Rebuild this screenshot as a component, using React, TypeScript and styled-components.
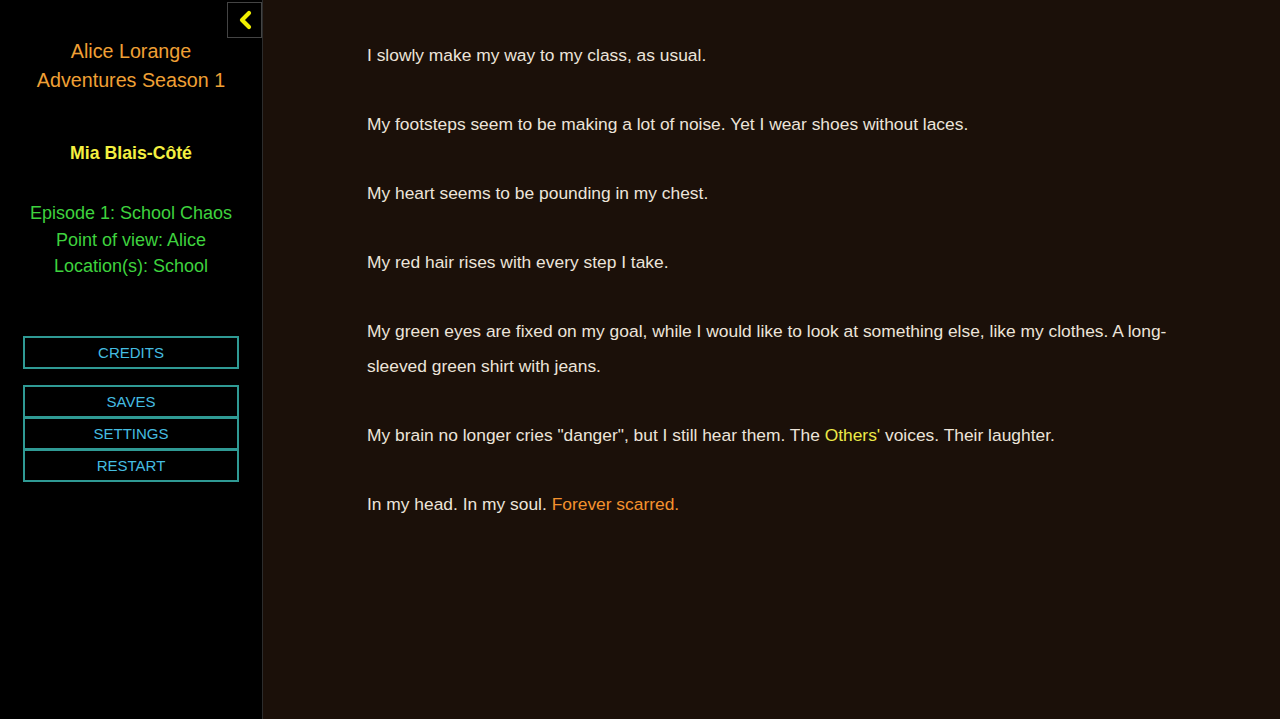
import React from 'react';
import styled, { createGlobalStyle } from 'styled-components';

const Global = createGlobalStyle`
  html, body { margin: 0; padding: 0; background: #1b1009; }
  body { font-family: "Liberation Sans", Arial, sans-serif; }
`;

const Page = styled.div`
  display: flex;
  width: 1280px;
  height: 719px;
  overflow: hidden;
`;

const Sidebar = styled.aside`
  position: relative;
  width: 262px;
  flex: none;
  background: #000;
  border-right: 1px solid #2c2c2c;
  padding-top: 37px;
  box-sizing: content-box;
  text-align: center;
`;

const BackButton = styled.button`
  position: absolute;
  top: 2px;
  right: 0;
  width: 35px;
  height: 36px;
  background: #000;
  border: 1px solid #444;
  display: flex;
  align-items: center;
  justify-content: center;
  padding: 0;
`;

const Title = styled.div`
  color: #f0a035;
  font-size: 19.7px;
  line-height: 29px;
`;

const Author = styled.div`
  color: #f4f040;
  font-size: 17.7px;
  font-weight: bold;
  margin-top: 48px;
`;

const Meta = styled.div`
  color: #3ed23e;
  font-size: 18px;
  line-height: 26.5px;
  margin-top: 36px;
`;

const Menu = styled.nav<{ $gap?: number }>`
  display: flex;
  flex-direction: column;
  margin: ${p => p.$gap ?? 0}px 23px 0 23px;
`;

const MenuButton = styled.button`
  height: 33px;
  margin-top: -1px;
  background: #000;
  border: 2px solid #2f9a94;
  color: #45bde0;
  font-family: "Liberation Sans", Arial, sans-serif;
  font-size: 15px;
  text-transform: uppercase;
  padding: 0;
`;

const Story = styled.main`
  flex: 1;
  padding: 38px 0 0 104px;
`;

const Passage = styled.div`
  max-width: 812px;
  color: #ece4da;
  font-family: "Liberation Sans", Arial, sans-serif;
  font-size: 17.4px;
  line-height: 35px;
`;

const Para = styled.p`
  margin: 0 0 34px 0;
`;

const Hl = styled.span<{ $tone: 'yellow' | 'orange' }>`
  color: ${p => (p.$tone === 'yellow' ? '#ecea48' : '#f4922e')};
`;

export default function App() {
  return (
    <>
      <Global />
      <Page>
        <Sidebar>
          <BackButton aria-label="Hide sidebar">
            <svg width="16" height="20" viewBox="0 0 16 20">
              <path d="M12 3 L5 10 L12 17" fill="none" stroke="#f2f000" strokeWidth="4.2" strokeLinecap="round" strokeLinejoin="round" />
            </svg>
          </BackButton>
          <Title>Alice Lorange<br />Adventures Season 1</Title>
          <Author>Mia Blais-Côté</Author>
          <Meta>
            Episode 1: School Chaos<br />
            Point of view: Alice<br />
            Location(s): School
          </Meta>
          <Menu $gap={57}>
            <MenuButton>Credits</MenuButton>
          </Menu>
          <Menu $gap={17}>
            <MenuButton>Saves</MenuButton>
            <MenuButton>Settings</MenuButton>
            <MenuButton>Restart</MenuButton>
          </Menu>
        </Sidebar>
        <Story>
          <Passage>
            <Para>I slowly make my way to my class, as usual.</Para>
            <Para>My footsteps seem to be making a lot of noise. Yet I wear shoes without laces.</Para>
            <Para>My heart seems to be pounding in my chest.</Para>
            <Para>My red hair rises with every step I take.</Para>
            <Para>My green eyes are fixed on my goal, while I would like to look at something else, like my clothes. A long-sleeved green shirt with jeans.</Para>
            <Para>My brain no longer cries "danger", but I still hear them. The <Hl $tone="yellow">Others'</Hl> voices. Their laughter.</Para>
            <Para>In my head. In my soul. <Hl $tone="orange">Forever scarred.</Hl></Para>
          </Passage>
        </Story>
      </Page>
    </>
  );
}
